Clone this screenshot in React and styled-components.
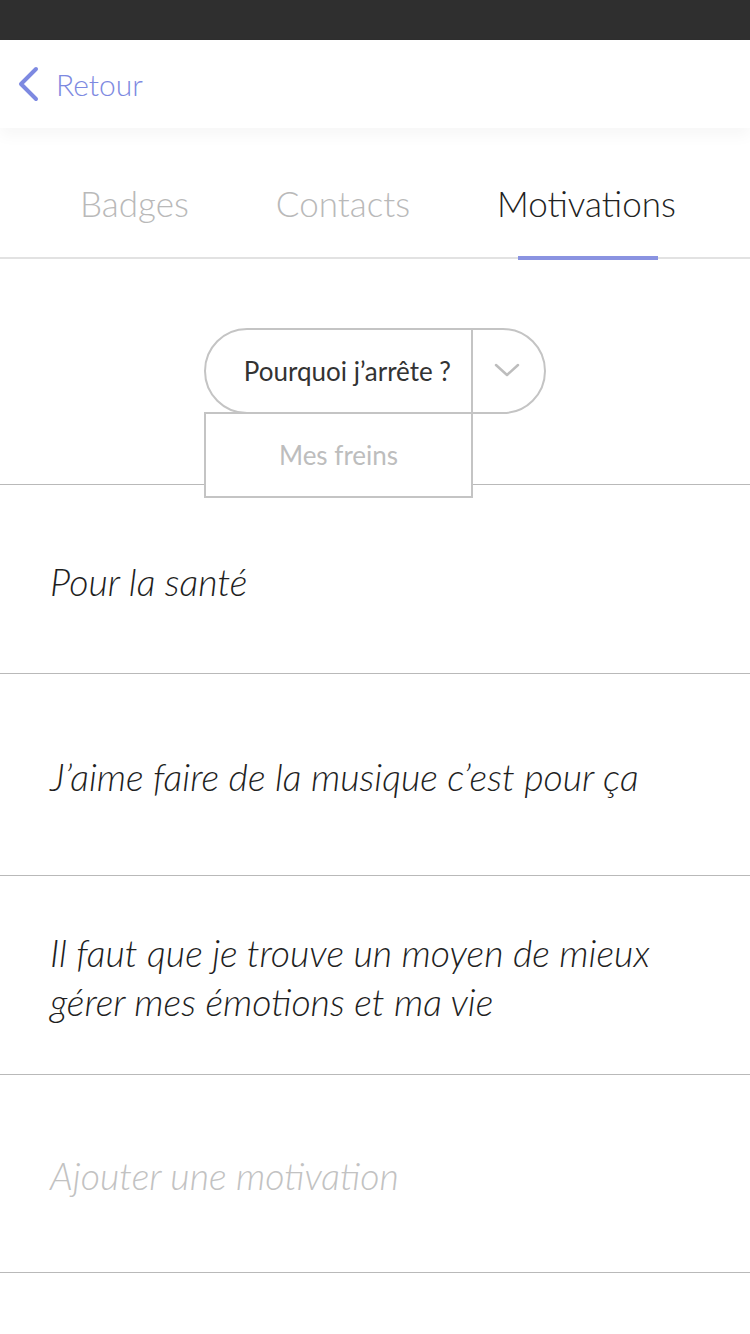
import { useState } from 'react';
import styled, { createGlobalStyle } from 'styled-components';

const GlobalStyle = createGlobalStyle`
  html, body {
    margin: 0;
    padding: 0;
    background: #fff;
    font-family: Lato, "Open Sans", sans-serif;
  }
  * { box-sizing: border-box; }
`;

const Page = styled.div`
  width: 750px;
  min-height: 1334px;
  background: #fff;
`;

const StatusBar = styled.div`
  height: 40px;
  background: #2f2f2f;
`;

const Header = styled.header`
  position: relative;
  z-index: 2;
  height: 88px;
  display: flex;
  align-items: center;
  padding-left: 16px;
  background: #fff;
  box-shadow: 0 8px 14px rgba(0, 0, 0, 0.035);
`;

const BackButton = styled.button`
  display: flex;
  align-items: center;
  gap: 16px;
  border: none;
  background: none;
  padding: 0;
  color: #7d89e1;
  font-family: Lato, sans-serif;
  font-size: 30px;
  font-weight: 300;
  cursor: pointer;
`;

const Tabs = styled.nav`
  display: flex;
  gap: 87px;
  padding-left: 80px;
  height: 131px;
  border-bottom: 2px solid #e2e2e2;
`;

const Tab = styled.div`
  position: relative;
  display: flex;
  align-items: center;
  padding-top: 20px;
  font-size: 35px;
  font-weight: 300;
  color: ${(p) => (p.active ? '#222' : '#b9b9b9')};
  &::after {
    content: '';
    display: ${(p) => (p.active ? 'block' : 'none')};
    position: absolute;
    left: 50%;
    width: 140px;
    margin-left: -68px;
    bottom: -3px;
    height: 4px;
    background: #8a93e1;
  }
`;

const SelectorSection = styled.section`
  height: 226px;
  display: flex;
  justify-content: center;
  align-items: center;
  border-bottom: 1px solid #b9b9b9;
  padding-bottom: 2px;
`;

const Select = styled.div`
  position: relative;
  display: flex;
  height: 86px;
  border: 2px solid #c4c4c4;
  border-radius: 43px;
  background: #fff;
`;

const SelectValue = styled.div`
  width: 267px;
  display: flex;
  align-items: center;
  justify-content: flex-end;
  padding-right: 20px;
  font-size: 26px;
  color: #333;
  border-right: 2px solid #c4c4c4;
`;

const SelectToggle = styled.div`
  width: 71px;
  display: flex;
  align-items: center;
  justify-content: center;
  padding-right: 4px;
`;

const Menu = styled.div`
  position: absolute;
  top: 82px;
  left: -2px;
  width: 269px;
  height: 86px;
  display: flex;
  align-items: center;
  justify-content: center;
  border: 2px solid #c4c4c4;
  background: #fff;
  font-size: 26px;
  color: #bdbdbd;
  z-index: 3;
`;

const List = styled.ul`
  list-style: none;
  margin: 0;
  padding: 0;
`;

const Row = styled.li`
  display: flex;
  align-items: center;
  min-height: ${(p) => p.h}px;
  padding: 4px 50px 0;
  border-bottom: 1px solid #b9b9b9;
  font-size: 37.5px;
  font-weight: 300;
  font-style: italic;
  line-height: 49px;
  color: ${(p) => (p.placeholder ? '#c2c2c2' : '#1f1f1f')};
`;

const motivations = [
  { text: 'Pour la santé', h: 189 },
  { text: 'J’aime faire de la musique c’est pour ça', h: 202 },
  { text: 'Il faut que je trouve un moyen de mieux gérer mes émotions et ma vie', h: 199 },
];

export default function App() {
  const [tab] = useState('Motivations');
  return (
    <>
      <GlobalStyle />
      <Page>
        <StatusBar />
        <Header>
          <BackButton>
            <svg width="24" height="36" viewBox="0 0 24 36" fill="none">
              <path d="M20 3 L5 18 L20 33" stroke="#7d89e1" strokeWidth="4" strokeLinecap="round" strokeLinejoin="round" />
            </svg>
            Retour
          </BackButton>
        </Header>
        <Tabs>
          {['Badges', 'Contacts', 'Motivations'].map((t) => (
            <Tab key={t} active={t === tab}>
              {t}
            </Tab>
          ))}
        </Tabs>
        <SelectorSection>
          <Select>
            <SelectValue>Pourquoi j’arrête ?</SelectValue>
            <SelectToggle>
              <svg width="26" height="15" viewBox="0 0 26 15" fill="none">
                <path d="M2 2 L13 12 L24 2" stroke="#bdbdbd" strokeWidth="2.5" strokeLinecap="round" strokeLinejoin="round" />
              </svg>
            </SelectToggle>
            <Menu>Mes freins</Menu>
          </Select>
        </SelectorSection>
        <List>
          {motivations.map((m) => (
            <Row key={m.text} h={m.h}>
              {m.text}
            </Row>
          ))}
          <Row h={198} placeholder="true">
            Ajouter une motivation
          </Row>
        </List>
      </Page>
    </>
  );
}
